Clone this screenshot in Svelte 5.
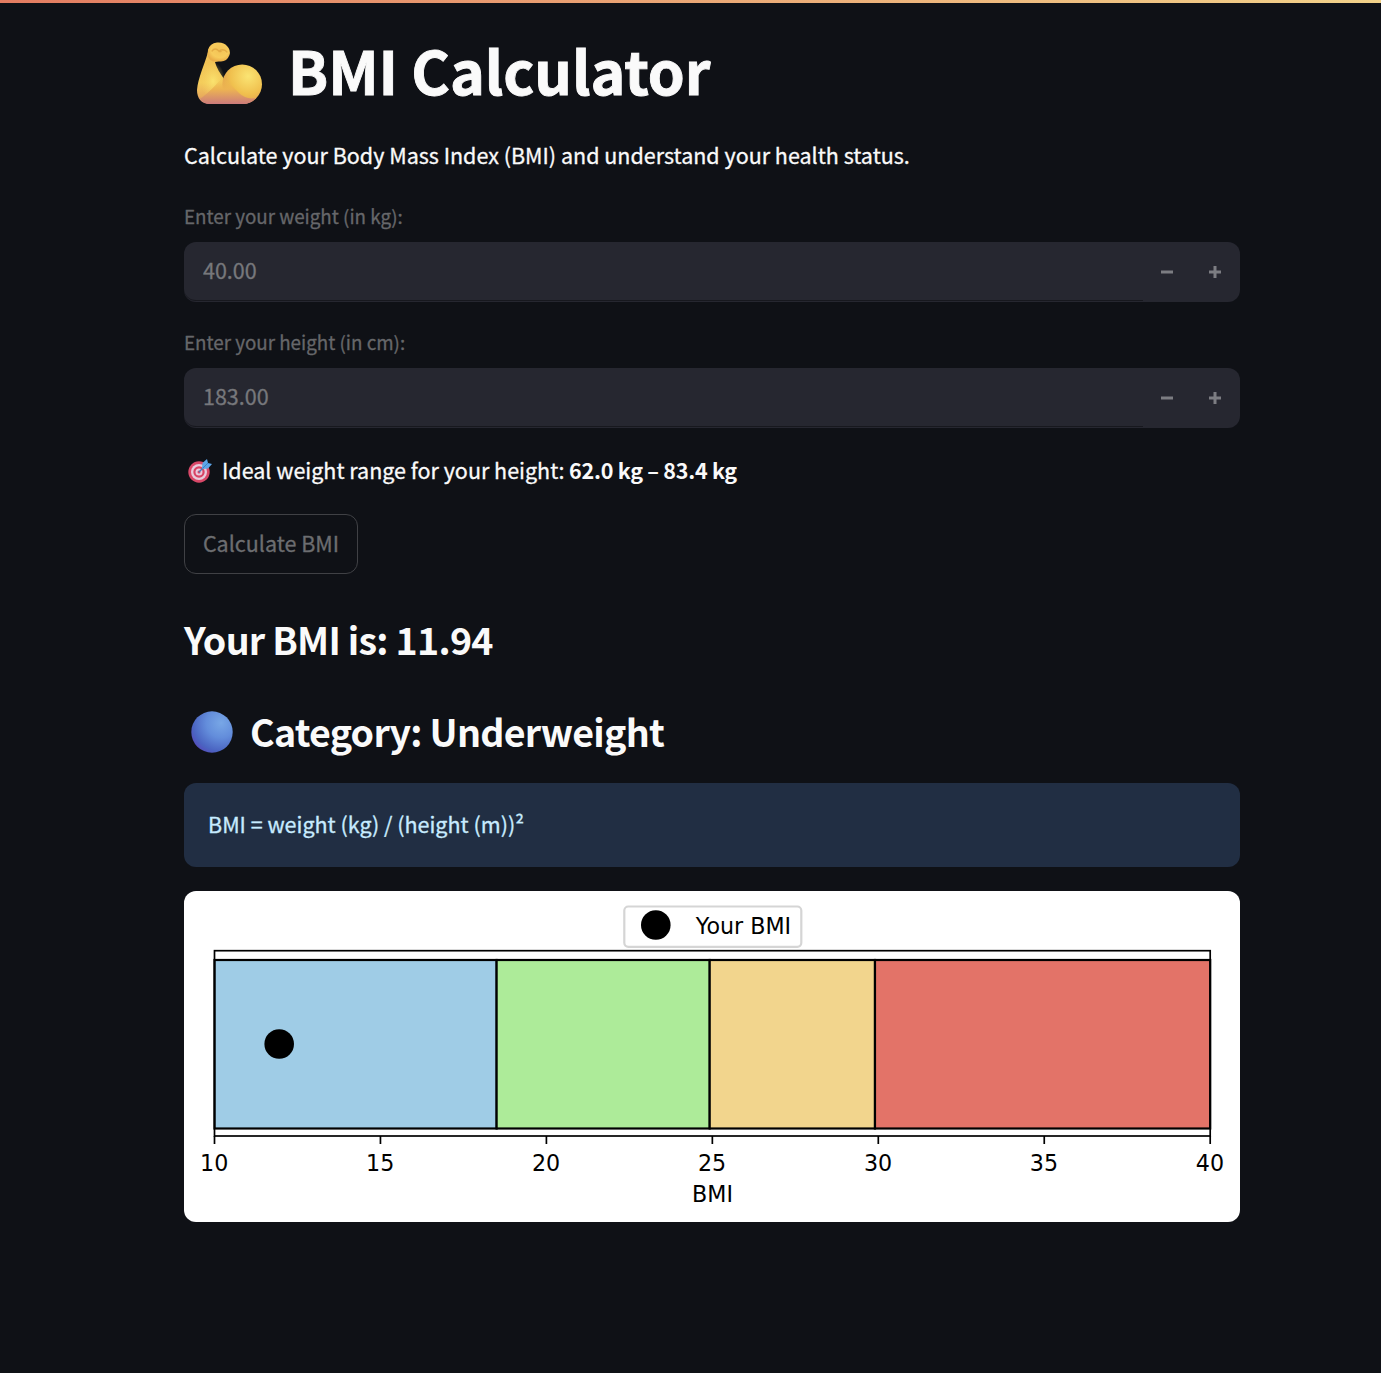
<script>
  const fields = [
    { id: 'weight', label: 'Enter your weight (in kg):', value: '40.00' },
    { id: 'height', label: 'Enter your height (in cm):', value: '183.00' }
  ];

  const chart = { left: 30.5, right: 1026.2, min: 10, max: 40 };
  const scale = (bmi) =>
    chart.left + ((bmi - chart.min) / (chart.max - chart.min)) * (chart.right - chart.left);

  const bands = [
    { from: 10, to: 18.5, color: '#9fcce6' },
    { from: 18.5, to: 24.92, color: '#adeb99' },
    { from: 24.92, to: 29.9, color: '#f2d58d' },
    { from: 29.9, to: 40, color: '#e37368' }
  ];
  const ticks = [10, 15, 20, 25, 30, 35, 40];
  const bmi = 11.94;
</script>

<div class="decoration"></div>
<main>
  <h1>
    <svg class="arm" viewBox="0 0 66 64" aria-hidden="true">
      <defs>
        <linearGradient id="forearm" x1="0" y1="0" x2="0" y2="1">
          <stop offset="0" stop-color="#edb84f" />
          <stop offset=".65" stop-color="#f4cd5b" />
          <stop offset=".87" stop-color="#e9ad5c" />
          <stop offset="1" stop-color="#cf7f78" />
        </linearGradient>
        <radialGradient id="bicep" cx=".65" cy=".3" r=".75">
          <stop offset="0" stop-color="#fae473" />
          <stop offset=".6" stop-color="#f0c04e" />
          <stop offset="1" stop-color="#e09b50" />
        </radialGradient>
        <radialGradient id="glow" cx=".5" cy=".5" r=".5">
          <stop offset="0" stop-color="#fbe571" stop-opacity=".9" />
          <stop offset="1" stop-color="#f6d160" stop-opacity="0" />
        </radialGradient>
        <linearGradient id="base" x1="0" y1="0" x2="0" y2="1">
          <stop offset="0" stop-color="#efbd4d" stop-opacity="0" />
          <stop offset=".45" stop-color="#edb452" />
          <stop offset="1" stop-color="#cc7b7b" />
        </linearGradient>
        <radialGradient id="fist" cx=".55" cy=".4" r=".6">
          <stop offset="0" stop-color="#f3c356" />
          <stop offset=".65" stop-color="#f7cc5c" />
          <stop offset="1" stop-color="#eaae48" />
        </radialGradient>
      </defs>
      <path d="M11 10 C12 3 16 1 22 1 L29 17 L18 20 C20 27 23 31 27 37 L46 62 H13 C4 62 0 56 0 48 C1 36 7 24 11 10Z" fill="url(#forearm)" />
      <ellipse cx="16" cy="39" rx="12" ry="19" fill="url(#glow)" />
      <circle cx="45.2" cy="42.2" r="19.8" fill="url(#bicep)" />
      <path d="M26 35 C19 43 10 52 3 57 Q7 62 13 62 H46 Q54 62 59 56 Q49 58 42 51Z" fill="url(#base)" />
      <path d="M11 8 Q13 1 20 .5 Q27 0 30 4 Q34 8 32.5 13 Q30 19.5 24 19.5 H16 Q9 17 11 8Z" fill="url(#fist)" />
      <path d="M15 9 Q18 5 22 9 Q27 6 30 10 M22 9.5 L24 9.5" fill="none" stroke="#d99937" stroke-width="1.3" stroke-linecap="round" opacity=".6" />
    </svg>
    <span>BMI Calculator</span>
  </h1>
  <p class="intro">Calculate your Body Mass Index (BMI) and understand your health status.</p>

  {#each fields as field}
    <div class="field">
      <label for={field.id}>{field.label}</label>
      <div class="control">
        <div class="entry"><input id={field.id} value={field.value} disabled /></div>
        <button class="step" disabled aria-label="Decrease">
          <svg width="12" height="12" viewBox="0 0 12 12"><path d="M0 6H12" /></svg>
        </button>
        <button class="step" disabled aria-label="Increase">
          <svg width="12" height="12" viewBox="0 0 12 12"><path d="M0 6H12M6 0V12" /></svg>
        </button>
      </div>
    </div>
  {/each}

  <p class="ideal">
    <svg class="target" viewBox="0 0 24 24" aria-hidden="true">
      <circle cx="11" cy="13" r="10.7" fill="#d94868" />
      <circle cx="11" cy="13" r="8" fill="#e8cbdc" />
      <circle cx="11" cy="13" r="5.7" fill="#d94364" />
      <circle cx="11" cy="13" r="3.5" fill="#e9c9dc" />
      <circle cx="11" cy="13" r="1.5" fill="#d2496d" />
      <path d="M11 13L19 5" stroke="#477bb5" stroke-width="1.4" />
      <path d="M14 9L14.5 4L19 0L20 4L24 5L20 9.5L15 10Z" fill="#5ca5e8" />
      <path d="M15 9L20 4" stroke="#3c80c5" stroke-width="1" />
    </svg>
    <span>Ideal weight range for your height:</span>
    <strong>62.0 kg – 83.4 kg</strong>
  </p>

  <button class="calculate" disabled>Calculate BMI</button>

  <h3 class="result">Your BMI is: 11.94</h3>
  <h3 class="category">
    <svg class="ball" viewBox="0 0 42 42" aria-hidden="true">
      <defs>
        <radialGradient id="blue" cx=".72" cy=".28" r=".8">
          <stop offset="0" stop-color="#78a7e6" />
          <stop offset=".45" stop-color="#638ddb" />
          <stop offset=".85" stop-color="#4b65c2" />
          <stop offset="1" stop-color="#5351bc" />
        </radialGradient>
      </defs>
      <circle cx="21" cy="21" r="20.7" fill="url(#blue)" />
    </svg>
    <span>Category: Underweight</span>
  </h3>

  <div class="info">BMI = weight (kg) / (height (m))²</div>

  <svg class="chart" viewBox="0 0 1056 331" role="img" aria-label="BMI scale">
    {#each bands as band}
      <rect x={scale(band.from)} y="69" width={scale(band.to) - scale(band.from)} height="168.5" fill={band.color} stroke="#000" stroke-width="2.2" />
    {/each}
    <rect x="30.5" y="59.7" width="995.7" height="185.3" fill="none" stroke="#000" stroke-width="1.7" />
    {#each ticks as tick}
      <path d="M{scale(tick)} 245V253" stroke="#000" stroke-width="1.7" />
      <text x={scale(tick) - 0.3} y="279.5">{tick}</text>
    {/each}
    <text x="528.5" y="311">BMI</text>
    <circle cx={scale(bmi) + 0.3} cy="153" r="14.8" />
    <rect x="440.3" y="15.5" width="177" height="40.3" rx="4" fill="#fff" stroke="#d5d5d5" stroke-width="2.2" />
    <circle cx="471.8" cy="34" r="14.8" />
    <text x="559.5" y="42.5">Your BMI</text>
  </svg>
</main>

<style>
  :global(body) {
    background: #0f1116;
  }
  .decoration {
    height: 3px;
    background: linear-gradient(90deg, #e37c61, #f2d28a);
  }
  main {
    width: 1056px;
    min-height: 1370px;
    margin-left: 184px;
    display: flex;
    flex-direction: column;
    color: #fafafa;
    font: 400 21.5px/34px "Noto Sans CJK SC", "Noto Sans", sans-serif;
    -webkit-text-stroke: 0.3px currentColor;
  }
  h1, h3, p {
    margin: 0;
    white-space: nowrap;
  }
  h1 {
    height: 78px;
    margin-top: 31px;
    display: flex;
    gap: 25px;
    padding-left: 13px;
    font-size: 59.1px;
    line-height: 71px;
    font-weight: 700;
    letter-spacing: -0.08px;
    -webkit-text-stroke-width: 0.9px;
  }
  .arm {
    width: 66px;
    height: 64px;
    margin-top: 8px;
  }
  .intro {
    height: 36px;
    margin-top: 26px;
  }
  .field {
    margin-top: 26px;
    height: 100px;
  }
  .intro + .field {
    margin-top: 28px;
  }
  label {
    display: block;
    height: 40px;
    font-size: 18.8px;
    line-height: 28px;
    color: #66676a;
  }
  .control {
    height: 60px;
    display: flex;
    background: #262730;
    border-radius: 12px;
    overflow: hidden;
  }
  .entry {
    width: 959px;
    height: 58px;
    border-bottom: 1px solid #17181e;
    border-radius: 0 0 0 12px;
  }
  input {
    box-sizing: border-box;
    width: 100%;
    height: 58px;
    padding: 0 19px 3px;
    border: 0;
    background: none;
    color: #77787c;
    font: inherit;
    -webkit-text-stroke: inherit;
    -webkit-text-stroke-color: currentColor;
  }
  .step {
    width: 48px;
    padding: 0;
    border: 0;
    background: none;
    display: grid;
    place-items: center;
  }
  .step path {
    stroke: #7c7d82;
    stroke-width: 3;
  }
  .ideal {
    display: flex;
    margin-top: 25px;
    height: 36px;
  }
  .target {
    width: 24px;
    height: 24px;
    margin: 6px 10px 0 4px;
  }
  strong {
    margin-left: 4.5px;
    letter-spacing: -0.27px;
    -webkit-text-stroke-width: 0;
  }
  .calculate {
    box-sizing: border-box;
    width: 174px;
    height: 60px;
    margin-top: 25px;
    padding: 0 0 2px;
    border: 1px solid #404145;
    border-radius: 12px;
    background: none;
    color: #6c6d70;
    font: inherit;
    white-space: nowrap;
  }
  h3 {
    height: 50px;
    font-size: 37.6px;
    line-height: 48px;
    font-weight: 600;
    letter-spacing: -0.75px;
    -webkit-text-stroke-width: 0;
  }
  .result {
    margin-top: 41px;
  }
  .category {
    display: flex;
    gap: 17px;
    margin-top: 42px;
    padding-left: 7px;
  }
  .ball {
    width: 42px;
    height: 42px;
    margin-top: 4px;
  }
  .info {
    box-sizing: border-box;
    height: 84px;
    margin-top: 26px;
    padding-left: 24px;
    border-radius: 12px;
    background: #212e43;
    color: #c7ebff;
    line-height: 82px;
  }
  .chart {
    width: 1056px;
    height: 331px;
    margin-top: 24px;
    border-radius: 12px;
    background: #fff;
    font: 22.2px "DejaVu Sans", sans-serif;
    text-anchor: middle;
    -webkit-text-stroke-width: 0;
  }
</style>
